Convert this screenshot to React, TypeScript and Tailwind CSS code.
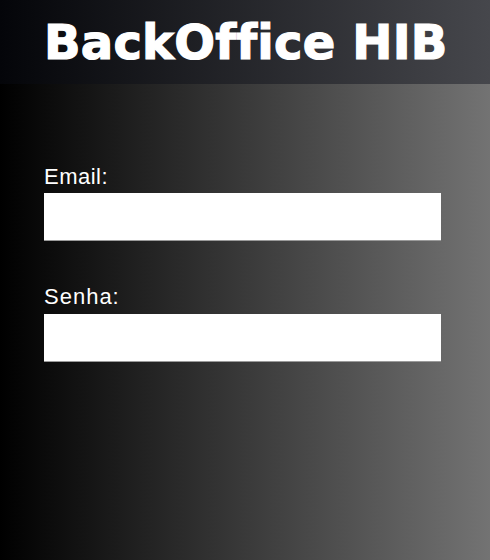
import React from "react";

export default function App() {
  return (
    <div className="w-[490px] h-[560px] flex flex-col bg-[linear-gradient(to_right,#000000,#737373)] overflow-hidden">
      <header className="h-[84px] shrink-0 flex items-center pl-[44px] bg-[linear-gradient(to_right,#040509,#46474c)]">
        <h1
          className="text-white font-bold text-[48px] leading-none tracking-[0.2px] [-webkit-text-stroke:1.2px_white]"
          style={{ fontFamily: '"DejaVu Sans", sans-serif' }}
        >
          BackOffice HIB
        </h1>
      </header>
      <form
        className="flex flex-col pl-[44px] pt-[79px]"
        style={{ fontFamily: '"Liberation Sans", Arial, sans-serif' }}
      >
        <label className="text-white text-[22px] leading-[28px] tracking-[0.5px]">Email:</label>
        <input
          type="email"
          className="mt-[2px] w-[397px] h-[48px] bg-white border-b border-[#9a9a9a] outline-none"
        />
        <label className="mt-[42px] text-white text-[22px] leading-[28px] tracking-[1px]">Senha:</label>
        <input
          type="password"
          className="mt-[3px] w-[397px] h-[48px] bg-white border-b border-[#9a9a9a] outline-none"
        />
      </form>
    </div>
  );
}
